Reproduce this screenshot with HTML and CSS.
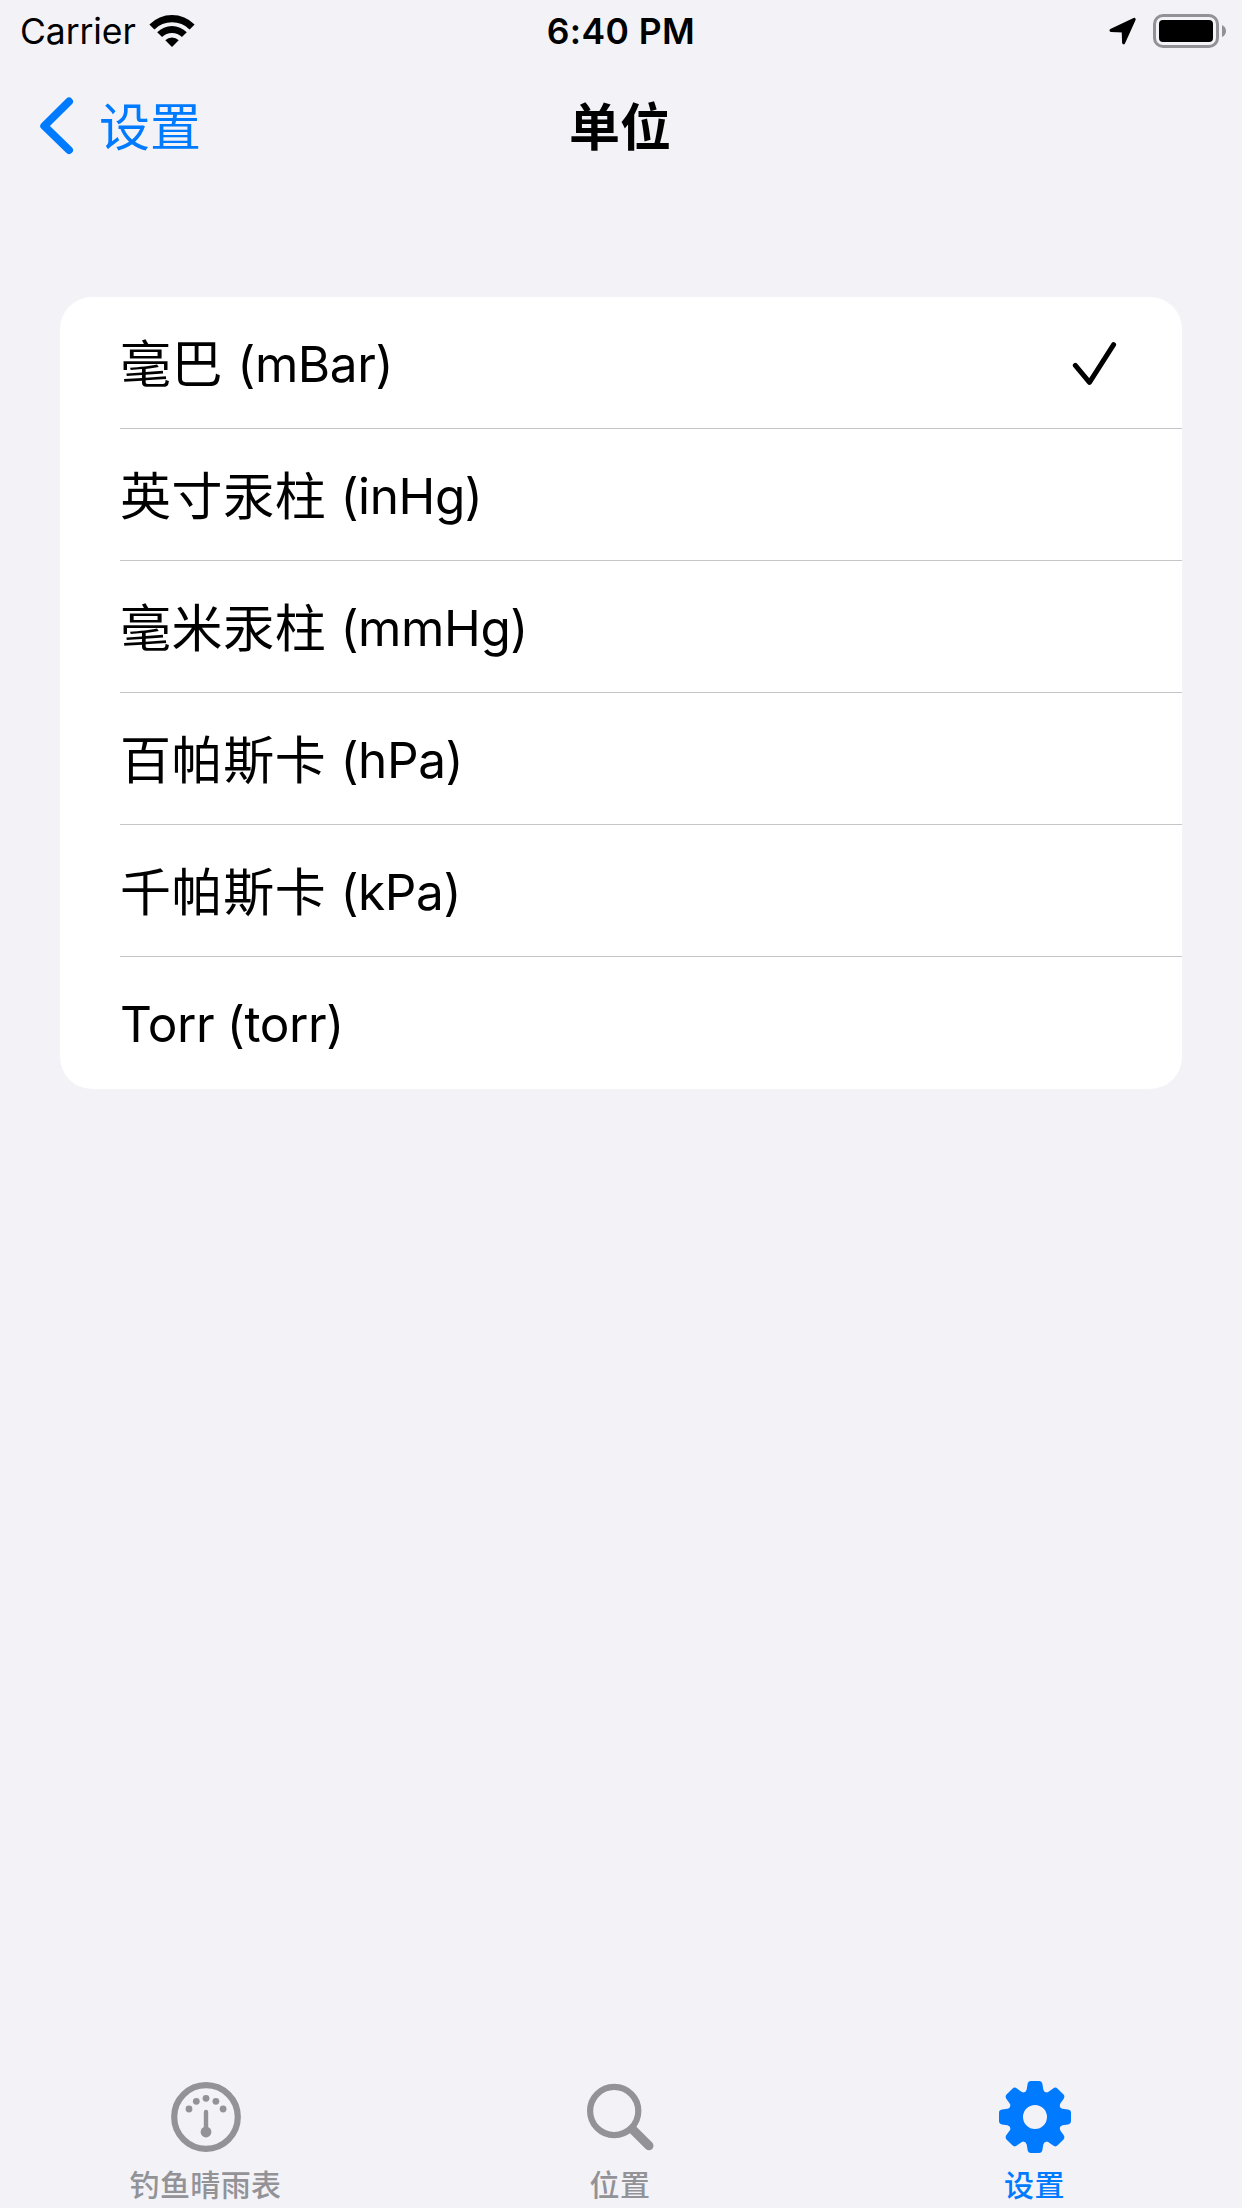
FILE: index.html
```html
<!DOCTYPE html>
<html lang="zh-CN">
<head>
<meta charset="utf-8">
<title>单位</title>
<link rel="stylesheet" href="styles.css">
</head>
<body>
<div class="screen">
  <header class="status">
    <div class="status-left">
      <span class="carrier">Carrier</span>
      <svg class="wifi" width="48" height="36" viewBox="148 12 48 36">
        <path d="M149.4 23.4A32 32 0 0 1 194.6 23.4L189.6 28.4A25 25 0 0 0 154.4 28.4Z"/>
        <path d="M157.2 31.2A21 21 0 0 1 186.8 31.2L181.9 36.1A14 14 0 0 0 162.1 36.1Z"/>
        <path d="M165.3 39.3A9.5 9.5 0 0 1 178.7 39.3L172 46Z"/>
      </svg>
    </div>
    <div class="clock">6:40 PM</div>
    <div class="status-right">
      <svg width="30" height="30" viewBox="1108 16 30 30">
        <path class="arrow" d="M1111 30.4L1134.2 19.3L1123.6 42.8L1123.2 30.9Z"/>
      </svg>
      <svg width="76" height="36" viewBox="1152 12 76 36">
        <rect class="shell" x="1154.5" y="14.5" width="63" height="31" rx="8.5"/>
        <rect x="1159" y="19" width="54" height="22" rx="4"/>
        <path class="cap" d="M1222 24Q1226 26 1226 30T1222 36Z"/>
      </svg>
    </div>
  </header>

  <nav class="navbar">
    <a class="back">
      <svg width="36" height="60" viewBox="38 96 36 60"><path d="M69 101.5L44.3 126L69 150"/></svg>
      <span>设置</span>
    </a>
    <h1 class="title">单位</h1>
  </nav>

  <ul class="list">
    <li class="row"><span class="label">毫巴 <span class="unit">(mBar)</span></span>
      <svg class="check" width="46" height="46" viewBox="1071 340 46 46"><path d="M1075.3 365.3L1089.5 382.3L1113.6 344.7"/></svg>
    </li>
    <li class="row"><span class="label">英寸汞柱 <span class="unit">(inHg)</span></span></li>
    <li class="row"><span class="label">毫米汞柱 <span class="unit">(mmHg)</span></span></li>
    <li class="row"><span class="label">百帕斯卡 <span class="unit">(hPa)</span></span></li>
    <li class="row"><span class="label">千帕斯卡 <span class="unit">(kPa)</span></span></li>
    <li class="row"><span class="label"><span class="unit">Torr (torr)</span></span></li>
  </ul>

  <footer class="tabs">
    <a class="tab">
      <svg width="76" height="76" viewBox="-38 -38 76 76">
        <circle class="line" r="31.8"/>
        <circle cx="-17" cy="-8" r="3.4"/><circle cx="-9.7" cy="-15.7" r="3.4"/><circle cy="-18.7" r="3.4"/><circle cx="9.9" cy="-15.7" r="3.4"/><circle cx="17.1" cy="-8" r="3.4"/>
        <path class="needle" d="M0 -5V14"/><circle cy="15" r="5.4"/>
      </svg>
      <span>钓鱼晴雨表</span>
    </a>
    <a class="tab">
      <svg width="76" height="76" viewBox="-38 -38 76 76">
        <circle class="line" cx="-5.8" cy="-6" r="24.1"/>
        <path class="handle" d="M12.4 12.2L29 28.8"/>
      </svg>
      <span>位置</span>
    </a>
    <a class="tab active">
      <svg width="76" height="76" viewBox="-38 -38 76 76">
        <defs><path id="tooth" d="M-12 -24Q-8.7 -25 -8.3 -27.5L-7.4 -33Q-6.9 -36 -4 -36H4Q6.9 -36 7.4 -33L8.3 -27.5Q8.7 -25 12 -24L8 -14H-8Z"/></defs>
        <circle class="ring" r="19"/>
        <use href="#tooth"/><use href="#tooth" transform="rotate(45)"/><use href="#tooth" transform="rotate(90)"/><use href="#tooth" transform="rotate(135)"/>
        <use href="#tooth" transform="rotate(180)"/><use href="#tooth" transform="rotate(225)"/><use href="#tooth" transform="rotate(270)"/><use href="#tooth" transform="rotate(315)"/>
      </svg>
      <span>设置</span>
    </a>
  </footer>
</div>
</body>
</html>
```
FILE: styles.css
```css
* { box-sizing: border-box; }
body {
  margin: 0;
  background: #f2f2f7;
  color: #000;
  font-family: Inter, "Noto Sans CJK SC", sans-serif;
}
svg { display: block; flex: none; }
.screen {
  width: 1242px;
  height: 2208px;
  display: flex;
  flex-direction: column;
}
.status {
  height: 60px;
  display: grid;
  grid-template-columns: 1fr auto 1fr;
  align-items: center;
  padding: 0 14px 0 20px;
  line-height: 60px;
}
.status-left, .status-right { display: flex; align-items: center; }
.status-left { gap: 12px; }
.carrier { font-size: 35.5px; width: 116px; letter-spacing: -0.1px; white-space: nowrap; padding-top: 2px; }
.clock { font-size: 35.5px; font-weight: 600; letter-spacing: 0.4px; padding: 2px 6px 0 0; }
.status-right { justify-content: flex-end; gap: 14px; }
.arrow { stroke: #000; stroke-width: 3; stroke-linejoin: round; }
.shell { fill: none; stroke: #929195; stroke-width: 3; }
.cap { fill: #929195; }

.navbar {
  height: 132px;
  display: grid;
  grid-template-columns: 1fr auto 1fr;
  align-items: center;
  padding: 0 40px 0 38px;
  font-family: "Noto Sans CJK SC", sans-serif;
}
.back { display: flex; align-items: center; gap: 25px; color: #007aff; font-size: 51px; line-height: 60px; }
.back span { padding-bottom: 5px; }
.back path { fill: none; stroke: #007aff; stroke-width: 8; stroke-linecap: round; stroke-linejoin: round; }
.title { margin: 0; font-size: 51px; line-height: 60px; font-weight: 600; padding-bottom: 5px; }

.list {
  list-style: none;
  margin: 105px 60px 0;
  padding: 0 0 0 60px;
  background: #fff;
  border-radius: 32px;
}
.row {
  height: 132px;
  display: flex;
  align-items: center;
  justify-content: space-between;
  padding-right: 65px;
  border-bottom: 1px solid #c6c6c8;
}
.row:last-child { border-bottom: 0; padding-bottom: 1px; }
.label {
  font-family: "Noto Sans CJK SC", sans-serif;
  font-size: 51px;
  letter-spacing: 0.6px;
  word-spacing: 2px;
  line-height: 128px;
  white-space: nowrap;
  padding-bottom: 3px;
}
.unit { font-family: Inter, sans-serif; font-size: 49.5px; letter-spacing: -0.4px; word-spacing: -1px; vertical-align: 1px; line-height: 1; }
.check path { fill: none; stroke: #000; stroke-width: 5; stroke-linecap: round; stroke-linejoin: round; }

.tabs {
  margin-top: auto;
  height: 129px;
  display: grid;
  grid-template-columns: 411px 418px 411px;
  color: #929297;
  fill: #929297;
}
.tab {
  display: flex;
  flex-direction: column;
  align-items: center;
  gap: 6px;
  font-family: "Noto Sans CJK SC", sans-serif;
  font-size: 30px;
  font-weight: 500;
  letter-spacing: 0.4px;
  line-height: 44px;
}
.tab .line { fill: none; stroke: #929297; stroke-width: 6.2; }
.needle { stroke: #929297; stroke-width: 4.4; stroke-linecap: round; }
.handle { stroke: #929297; stroke-width: 9; stroke-linecap: round; }
.active { color: #007aff; fill: #007aff; }
.ring { fill: none; stroke: #007aff; stroke-width: 14; }
```
